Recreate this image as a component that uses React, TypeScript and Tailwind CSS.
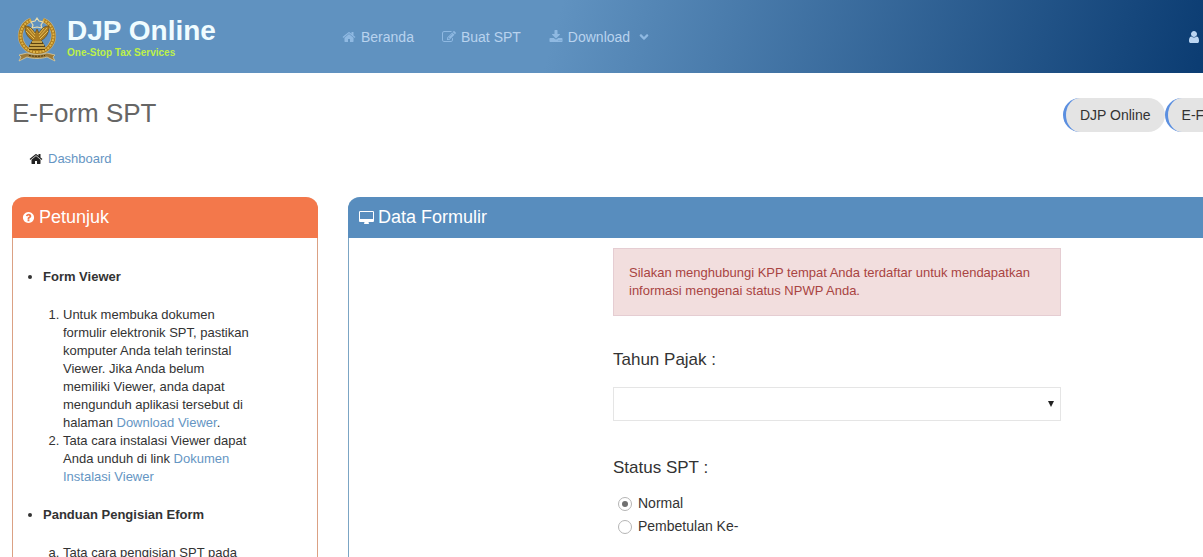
import React, { useState } from 'react';
import { FaAngleDown } from 'react-icons/fa';

type IconProps = {
  d: string;
  className?: string;
  viewBox?: string;
};

const Icon = ({ d, className, viewBox = '0 0 1792 1792' }: IconProps) => (
  <svg viewBox={viewBox} fill="currentColor" className={className} aria-hidden="true">
    <path d={d} />
  </svg>
);

const icons = {
  home: 'M1472 992v480q0 26-19 45t-45 19h-384v-384h-256v384h-384q-26 0-45-19t-19-45v-480q0-1 .5-3t.5-3l575-474 575 474q1 2 1 6zm223-69l-62 74q-8 9-21 11h-3q-13 0-21-7l-692-577-692 577q-12 8-24 7-13-2-21-11l-62-74q-8-10-7-23.5t11-21.5l719-599q32-26 76-26t76 26l244 204v-195q0-14 9-23t23-9h192q14 0 23 9t9 23v408l219 182q10 8 11 21.5t-7 23.5z',
  edit: 'M888 1184l116-116-152-152-116 116v56h96v96h56zm440-720q-16-16-33 1l-350 350q-17 17-1 33t33-1l350-350q17-17 1-33zm80 594v190q0 119-84.5 203.5t-203.5 84.5h-832q-119 0-203.5-84.5t-84.5-203.5v-832q0-119 84.5-203.5t203.5-84.5h832q63 0 117 25 15 7 18 23 3 17-9 29l-49 49q-14 14-32 8-23-6-45-6h-832q-66 0-113 47t-47 113v832q0 66 47 113t113 47h832q66 0 113-47t47-113v-126q0-13 9-22l64-64q15-15 35-7t20 29zm-96-738l288 288-672 672h-288v-288zm444 132l-92 92-288-288 92-92q28-28 68-28t68 28l152 152q28 28 28 68t-28 68z',
  download:
    'M1344 1344q0-26-19-45t-45-19-45 19-19 45 19 45 45 19 45-19 19-45zm256 0q0-26-19-45t-45-19-45 19-19 45 19 45 45 19 45-19 19-45zm128-224v320q0 40-28 68t-68 28h-1472q-40 0-68-28t-28-68v-320q0-40 28-68t68-28h465l135 136q58 56 136 56t136-56l136-136h464q40 0 68 28t28 68zm-325-569q17 41-14 70l-448 448q-18 19-45 19t-45-19l-448-448q-31-29-14-70 17-39 59-39h256v-448q0-26 19-45t45-19h256q26 0 45 19t19 45v448h256q42 0 59 39z',
  user: 'M1536 1399q0 109-62.5 187t-150.5 78h-854q-88 0-150.5-78t-62.5-187q0-85 8.5-160.5t31.5-152 58.5-131 94-89 134.5-34.5q131 128 313 128t313-128q76 0 134.5 34.5t94 89 58.5 131 31.5 152 8.5 160.5zm-256-887q0 159-112.5 271.5t-271.5 112.5-271.5-112.5-112.5-271.5 112.5-271.5 271.5-112.5 271.5 112.5 112.5 271.5z',
  question:
    'M1024 1376v-192q0-14-9-23t-23-9h-192q-14 0-23 9t-9 23v192q0 14 9 23t23 9h192q14 0 23-9t9-23zm256-672q0-88-55.5-163t-138.5-116-170-41q-243 0-371 213-15 24 8 42l132 100q7 6 19 6 16 0 25-12 53-68 86-92 34-24 86-24 48 0 85.5 26t37.5 59q0 38-20 61t-68 45q-63 28-115.5 86.5t-52.5 125.5v36q0 14 9 23t23 9h192q14 0 23-9t9-23q0-19 21.5-49.5t54.5-49.5q32-18 49-28.5t46-35 44.5-48 28-60.5 12.5-81zm384 192q0 209-103 385.5t-279.5 279.5-385.5 103-385.5-103-279.5-279.5-103-385.5 103-385.5 279.5-279.5 385.5-103 385.5 103 279.5 279.5 103 385.5z',
  desktop:
    'M1792 992v-832q0-13-9.5-22.5t-22.5-9.5h-1600q-13 0-22.5 9.5t-9.5 22.5v832q0 13 9.5 22.5t22.5 9.5h1600q13 0 22.5-9.5t9.5-22.5zm128-832v1088q0 66-47 113t-113 47h-544q0 37 16 77.5t32 71 16 43.5q0 26-19 45t-45 19h-512q-26 0-45-19t-19-45q0-14 16-44t32-70 16-78h-544q-66 0-113-47t-47-113v-1088q0-66 47-113t113-47h1600q66 0 113 47t47 113z',
};

const Emblem = () => (
  <svg viewBox="0 0 40 46" className="h-[46px] w-10 shrink-0" aria-hidden="true">
    {/* wreath */}
    <path
      d="M14 4C4 8 0 21 7 30c3 4 7 6 13 6s10-2 13-6c7-9 3-22-7-26"
      fill="none"
      stroke="#c9b98c"
      strokeWidth="5"
    />
    <path
      d="M14 4C4 8 0 21 7 30c3 4 7 6 13 6s10-2 13-6c7-9 3-22-7-26"
      fill="none"
      stroke="#a87a20"
      strokeWidth="4"
    />
    <path
      d="M14 4C4 8 0 21 7 30c3 4 7 6 13 6s10-2 13-6c7-9 3-22-7-26"
      fill="none"
      stroke="#e0b548"
      strokeWidth="2"
      strokeDasharray="2 1"
    />
    {/* star */}
    <path
      d="M20 2l2 3 4 1-2 3 1 3-5-1-5 1 1-3-2-3 4-1z"
      fill="#6092c0"
      stroke="#e8dcae"
      strokeWidth="1.2"
    />
    {/* wings */}
    <path
      d="M8 10c3 0 6 1 8 4l2 3 2-4 2 4 2-3c2-3 5-4 8-4 0 6-2 11-7 14l-2 2h-6l-2-2c-5-3-7-8-7-14z"
      fill="#a97b22"
      stroke="#5a410f"
      strokeWidth=".6"
    />
    <path
      d="M10 12l8 9M9 15l8 8M13 12l5 6M30 12l-8 9M31 15l-8 8M27 12l-5 6"
      stroke="#e5bd55"
      strokeWidth="1"
    />
    {/* base */}
    <path d="M15 25h10l3 5v4H12v-4z" fill="#5d430e" />
    <path d="M15 26h10M13 29h14M12 32h16" stroke="#e8c25c" strokeWidth="1.6" />
    {/* ribbon */}
    <path
      d="M2 39l8-2c6 2 14 2 20 0l8 2-2 2 2 4-8-4c-6 2-14 2-20 0l-8 4 2-4z"
      fill="#9c7a38"
      stroke="#dccb9c"
      strokeWidth=".8"
    />
    <path d="M12 39.500c5 1 11 1 16 0" fill="none" stroke="#4a360c" strokeDasharray="2 1" />
  </svg>
);

const Navbar = () => (
  <header className="h-[73px] flex items-center bg-[linear-gradient(105deg,#6092c0_46%,#0b3c72_100%)] text-[#b9d3ee]">
    <a href="#home" className="flex w-[326px] shrink-0 items-center gap-2.5 pl-[17px] pt-1">
      <Emblem />
      <span className="flex flex-col font-bold">
        <span className="text-[28px] leading-7 text-[#f0fcff]">DJP Online</span>
        <span className="text-[10px] leading-4 text-[#bdf04a]">One-Stop Tax Services</span>
      </span>
    </a>
    <nav className="flex items-center gap-7 pl-4 text-sm">
      <a href="#beranda" className="flex items-center gap-[5px]">
        <Icon d={icons.home} className="size-3.5 text-[#8fb9e2]" />
        Beranda
      </a>
      <a href="#buat" className="flex items-center gap-[5px]">
        <Icon d={icons.edit} className="size-3.5 text-[#8fb9e2]" />
        Buat SPT
      </a>
      <a href="#download" className="flex items-center gap-[5px]">
        <Icon d={icons.download} className="size-3.5 text-[#8fb9e2]" />
        Download
        <FaAngleDown className="ml-0.5 size-3.5 text-[#8fb9e2]" />
      </a>
    </nav>
    <button type="button" aria-label="Akun" className="ml-auto pr-0.5">
      <Icon d={icons.user} className="size-3.5 text-[#bcd6f2]" />
    </button>
  </header>
);

const pill =
  'flex h-[34px] items-center rounded-full border-l-[3px] border-[#5b8fe0] bg-[#e4e4e4] pl-3.5 pr-3.5';

const link = 'text-[#6595c3]';

const Petunjuk = () => (
  <aside className="w-[306px] shrink-0 rounded-t-xl border border-t-0 border-[#dba184]">
    <h2 className="-mx-px flex h-[41px] items-center gap-1 rounded-t-xl bg-[#f3784b] pb-0.5 pl-2.5 text-lg text-white">
      <Icon d={icons.question} className="size-[13px] mt-0.5" />
      Petunjuk
    </h2>
    <ul className="list-disc pl-[30px] pr-16 pt-[30px] text-[13px] leading-[18px]">
      <li className="mb-5">
        <strong>Form Viewer</strong>
        <ol className="mt-5 list-decimal pl-5">
          <li>
            Untuk membuka dokumen formulir elektronik SPT, pastikan komputer Anda telah terinstal
            Viewer. Jika Anda belum memiliki Viewer, anda dapat mengunduh aplikasi tersebut di
            halaman{' '}
            <a href="#viewer" className={link}>
              Download Viewer
            </a>
            .
          </li>
          <li>
            Tata cara instalasi Viewer dapat Anda unduh di link{' '}
            <a href="#dokumen" className={link}>
              Dokumen Instalasi Viewer
            </a>
          </li>
        </ol>
      </li>
      <li>
        <strong>Panduan Pengisian Eform</strong>
        <ol className="mt-5 list-[lower-alpha] pl-5">
          <li>Tata cara pengisian SPT pada</li>
        </ol>
      </li>
    </ul>
  </aside>
);

const radio =
  "flex size-3.5 appearance-none items-center justify-center rounded-full border border-[#b5b5b5] bg-white checked:before:size-1.5 checked:before:rounded-full checked:before:bg-[#707070] checked:before:content-['']";

const DataFormulir = () => {
  const [status, setStatus] = useState<string>('normal');

  return (
    <main className="min-w-0 flex-1 rounded-tl-xl border-l border-[#7ba5c4]">
      <h2 className="-ml-px flex h-[41px] items-center gap-1 rounded-tl-xl bg-[#588dbe] pb-0.5 pl-[11px] text-lg text-white">
        <Icon d={icons.desktop} viewBox="0 0 1920 1792" className="h-3.5 w-[15px] mt-0.5" />
        Data Formulir
      </h2>
      <form className="ml-66 mt-2.5 w-[448px]">
        <p className="border border-[#e5cdd2] bg-[#f2dede] p-[15px] text-[13px] leading-[18px] text-[#a94442]">
          Silakan menghubungi KPP tempat Anda terdaftar untuk mendapatkan informasi mengenai status
          NPWP Anda.
        </p>
        <label htmlFor="tahun" className="mt-8 block text-[17px] leading-6">
          Tahun Pajak :
        </label>
        <div className="relative mt-[15px]">
          <select
            id="tahun"
            className="block h-[34px] w-full appearance-none border border-[#e5e5e5] bg-white px-3 text-sm"
          />
          <svg
            viewBox="0 0 6 6"
            className="pointer-events-none absolute right-[7px] top-3.5 size-1.5"
            aria-hidden="true"
          >
            <path d="M0 0h6L3 6z" fill="#222" />
          </svg>
        </div>
        <fieldset className="mt-[35px]">
          <legend className="text-[17px] leading-6">Status SPT :</legend>
          <div className="mt-3 flex flex-col pl-[5px] text-sm leading-[23px]">
            <label className="flex items-center gap-1.5">
              <input
                type="radio"
                name="status"
                className={radio}
                checked={status === 'normal'}
                onChange={() => setStatus('normal')}
              />
              Normal
            </label>
            <label className="flex items-center gap-1.5">
              <input
                type="radio"
                name="status"
                className={radio}
                checked={status === 'pembetulan'}
                onChange={() => setStatus('pembetulan')}
              />
              Pembetulan Ke-
            </label>
          </div>
        </fieldset>
      </form>
    </main>
  );
};

const App = () => (
  <div className="h-screen overflow-hidden bg-white font-['Liberation_Sans',Arial,sans-serif] text-[#333]">
    <Navbar />
    <div className="flex items-center justify-between pl-3 pt-5">
      <h1 className="text-[26px] leading-10 text-[#666]">E-Form SPT</h1>
      <div className="flex w-35 overflow-hidden whitespace-nowrap pt-1 text-sm">
        <a href="#djp" className={pill}>
          DJP Online
        </a>
        <a href="#eform" className={pill}>
          E-Form
        </a>
      </div>
    </div>
    <div className="flex items-center gap-[5px] pl-[29px] pt-4 text-[13px] leading-5">
      <Icon d={icons.home} className="size-3.5 text-[#222]" />
      <a href="#dashboard" className={link}>
        Dashboard
      </a>
    </div>
    <div className="flex gap-[30px] pl-3 pt-7">
      <Petunjuk />
      <DataFormulir />
    </div>
  </div>
);

export default App;
